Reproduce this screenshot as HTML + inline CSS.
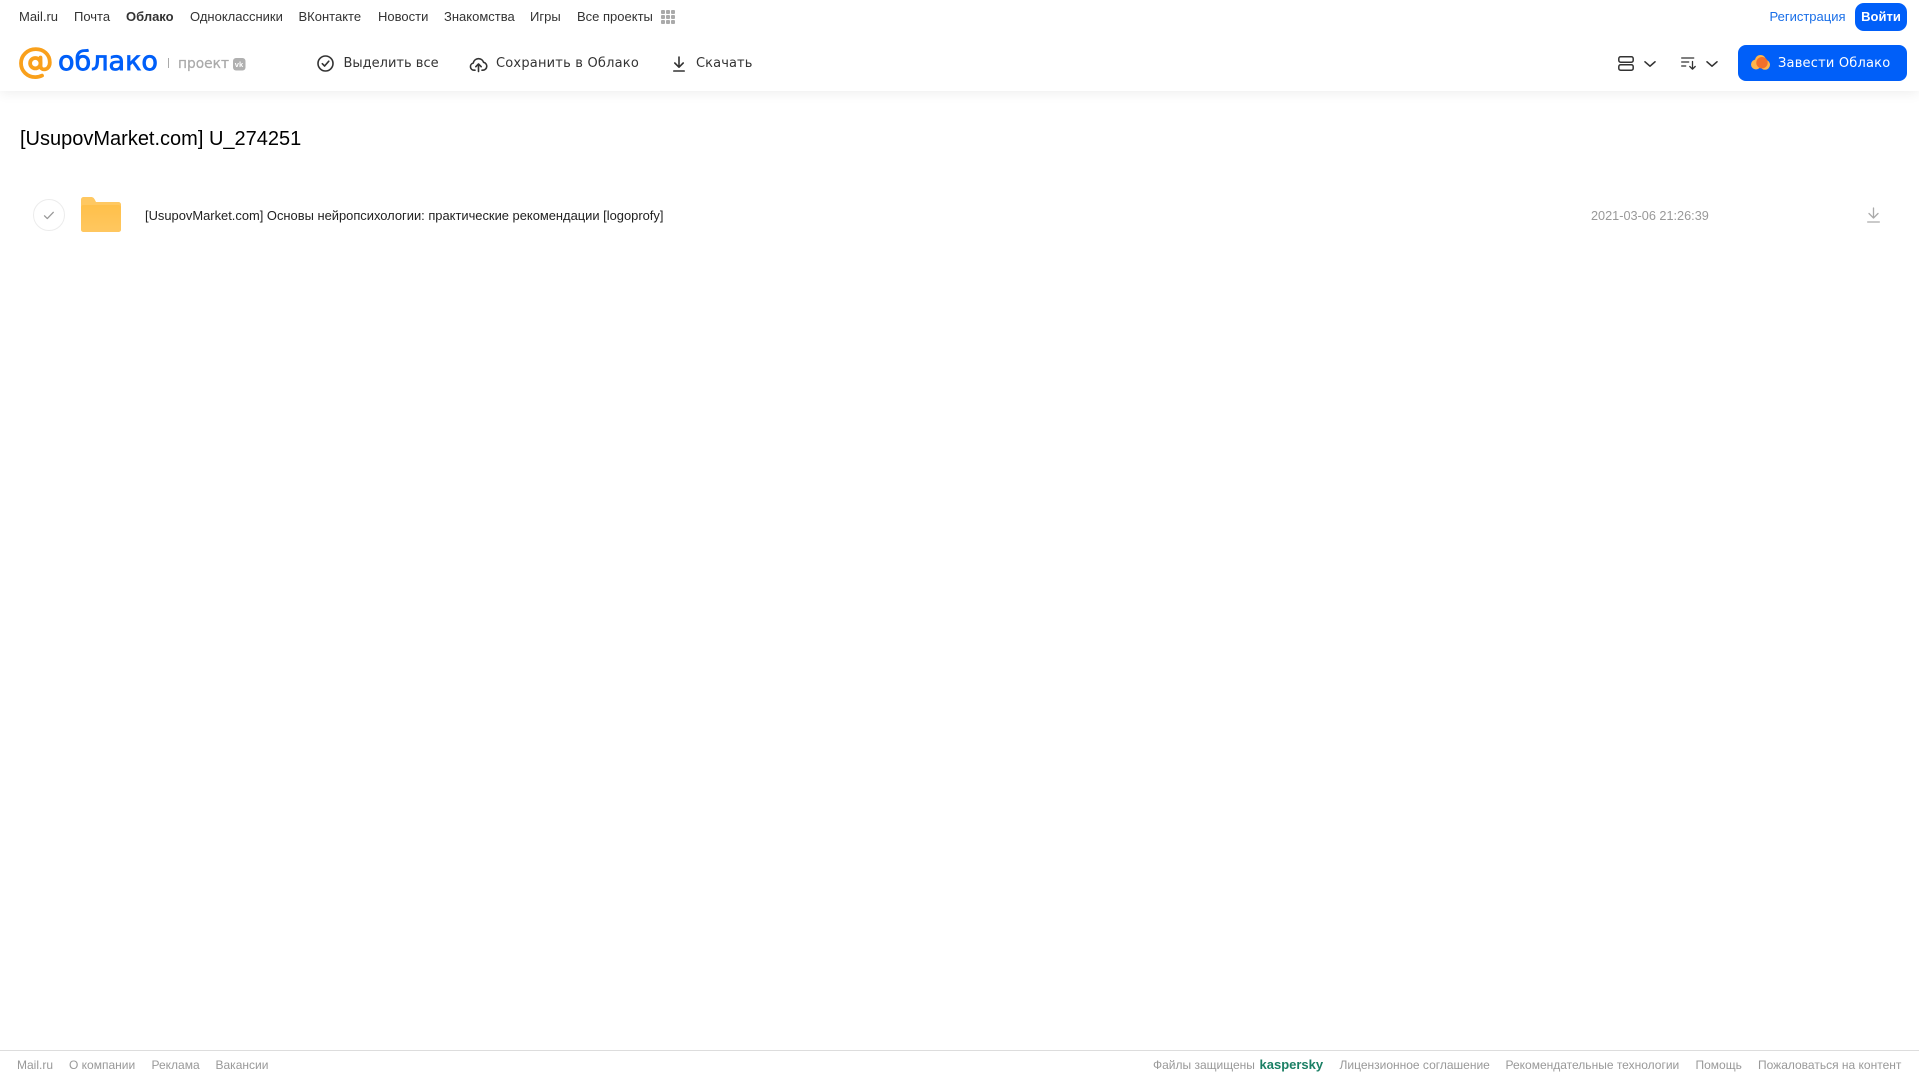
<!DOCTYPE html>
<html lang="ru">
<head>
<meta charset="utf-8">
<title>[UsupovMarket.com] U_274251</title>
<style>
html,body{margin:0;padding:0;background:#fff}
body{position:relative;width:1919px;height:1079px;overflow:hidden;font-family:"Liberation Sans",sans-serif}
.t{position:absolute;white-space:nowrap;line-height:20px;height:20px}
.n{top:7px;font-size:13px;color:#333}
.m{top:54px;font-family:"DejaVu Sans",sans-serif;font-size:13px;color:#333}
.f{top:1055px;font-size:12px;color:#999}
svg{position:absolute;overflow:visible}
#hd{position:absolute;left:0;top:0;width:1919px;height:91px;background:#fff;box-shadow:0 2px 12px rgba(0,0,0,.07)}
</style>
</head>
<body>
<div id="hd"></div>

<span class="t n" style="left:19px">Mail.ru</span>
<span class="t n" style="left:74px">Почта</span>
<span class="t n" style="left:126px;font-weight:700">Облако</span>
<span class="t n" style="left:190px">Одноклассники</span>
<span class="t n" style="left:298.500px">ВКонтакте</span>
<span class="t n" style="left:378px">Новости</span>
<span class="t n" style="left:444px">Знакомства</span>
<span class="t n" style="left:530px">Игры</span>
<span class="t n" style="left:577px">Все проекты</span>
<svg style="left:661px;top:10px" width="14" height="14" viewBox="0 0 14 14" fill="#aaa">
<rect x="0" y="0" width="4" height="4" rx="1"/><rect x="5" y="0" width="4" height="4" rx="1"/><rect x="10" y="0" width="4" height="4" rx="1"/>
<rect x="0" y="5" width="4" height="4" rx="1"/><rect x="5" y="5" width="4" height="4" rx="1"/><rect x="10" y="5" width="4" height="4" rx="1"/>
<rect x="0" y="10" width="4" height="4" rx="1"/><rect x="5" y="10" width="4" height="4" rx="1"/><rect x="10" y="10" width="4" height="4" rx="1"/>
</svg>

<span class="t n" style="left:1769.500px;color:#1a6fe8">Регистрация</span>
<div style="position:absolute;left:1855px;top:3px;width:52px;height:28px;border-radius:9px;background:#005ff9;color:#fff;font-size:13px;font-weight:700;line-height:28px;text-align:center">Войти</div>

<!-- logo -->
<svg style="left:19px;top:47px" width="33" height="32" viewBox="0 0 33 32" fill="none">
<path d="M21.500 16.200a5.200 5.200 0 1 1-10.400 0a5.200 5.200 0 1 1 10.400 0z" stroke="#f9a01b" stroke-width="3.800"/>
<path d="M21.500 10.500v8.200c0 2.600 1.600 3.700 3.600 3.700 3 0 5.700-2.300 5.700-7 0-8-6.300-13.300-14-13.300C8.500 2.100 2 8.400 2 16.200c0 7.800 6.300 13.900 14.300 13.900 2.700 0 4.900-.6 6.700-1.500" stroke="#f9a01b" stroke-width="3.800" stroke-linecap="round"/>
</svg>
<svg style="left:0;top:0" width="260" height="91">
<text x="58" y="70" font-family="DejaVu Sans, sans-serif" font-size="27" fill="#005ff9" stroke="#005ff9" stroke-width=".8" textLength="100" lengthAdjust="spacingAndGlyphs">облако</text>
<rect x="168" y="58" width="1" height="10" fill="#aaa"/>
<text x="178" y="68" font-family="DejaVu Sans, sans-serif" font-size="14.500" fill="#aaa" stroke="#aaa" stroke-width=".25" textLength="51" lengthAdjust="spacingAndGlyphs">проект</text>
<rect x="233" y="58" width="12.500" height="12.500" rx="3" fill="#b0b0b0"/>
<text x="234.800" y="67" font-family="Liberation Sans, sans-serif" font-size="7.500" font-weight="700" fill="#fff">vk</text>
</svg>

<!-- toolbar -->
<svg style="left:316.500px;top:54.500px" width="17" height="17" viewBox="0 0 17 17" fill="none" stroke="#333" stroke-width="1.600" stroke-linecap="round" stroke-linejoin="round">
<circle cx="8.500" cy="8.500" r="7.500"/><path d="M5.300 8.700l2.300 2.300 4.200-4.800"/>
</svg>
<span class="t m" style="left:343.500px">Выделить все</span>

<svg style="left:469.500px;top:55.500px" width="17" height="16" viewBox="0 0 17 16" fill="none" stroke="#333" stroke-width="1.600" stroke-linecap="round" stroke-linejoin="round">
<path d="M5 14.200H4A3.600 3.600 0 0 1 3.200 7.100 5.400 5.400 0 0 1 13.600 6.300 4 4 0 0 1 13 14.200h-1"/>
<path d="M8.500 15.500V8M5.800 10.700l2.700-2.700 2.700 2.700"/>
</svg>
<span class="t m" style="left:496px;letter-spacing:.2px">Сохранить в Облако</span>

<svg style="left:673px;top:56px" width="12" height="16" viewBox="0 0 12 16" fill="none" stroke="#333" stroke-width="1.600" stroke-linecap="round" stroke-linejoin="round">
<path d="M6 1v10M1.800 7L6 11.200 10.200 7M.8 15h10.400"/>
</svg>
<span class="t m" style="left:696px;letter-spacing:.1px">Скачать</span>

<svg style="left:1618px;top:56px" width="16" height="15" viewBox="0 0 16 15" fill="none" stroke="#333" stroke-width="1.500">
<rect x=".8" y=".8" width="14.400" height="5.400" rx="1.800"/><rect x=".8" y="8.800" width="14.400" height="5.400" rx="1.800"/>
</svg>
<svg style="left:1644px;top:61px" width="12" height="6" viewBox="0 0 12 6" fill="none" stroke="#333" stroke-width="1.600" stroke-linecap="round" stroke-linejoin="round"><path d="M1 .8l5 4.400 5-4.400"/></svg>
<svg style="left:1681px;top:57px" width="16" height="13" viewBox="0 0 16 13" fill="none" stroke="#333" stroke-width="1.300" stroke-linecap="round" stroke-linejoin="round">
<path d="M.7 1h12M.7 5h7M.7 9h4M11.500 4.500v7.500M8.800 9.500l2.700 2.700 2.700-2.700"/>
</svg>
<svg style="left:1706px;top:61px" width="12" height="6" viewBox="0 0 12 6" fill="none" stroke="#333" stroke-width="1.600" stroke-linecap="round" stroke-linejoin="round"><path d="M1 .8l5 4.400 5-4.400"/></svg>

<div style="position:absolute;left:1738px;top:45px;width:169px;height:36px;border-radius:8px;background:#005ff9"></div>
<svg style="left:1751px;top:55px" width="19" height="15" viewBox="0 0 19 15">
<circle cx="5" cy="9.500" r="5" fill="#ffb54a"/><circle cx="9.500" cy="5.500" r="5.500" fill="#ffb54a"/><circle cx="14" cy="9.800" r="5" fill="#ffb54a"/>
<circle cx="11" cy="7.700" r="5.700" fill="#f2702a"/>
</svg>
<span class="t m" style="left:1778px;color:#fff;letter-spacing:.2px">Завести Облако</span>

<!-- title -->
<div class="t" style="left:20px;top:129px;font-size:20px;color:#000">[UsupovMarket.com] U_274251</div>

<!-- row -->
<div style="position:absolute;left:33px;top:199px;width:30px;height:30px;border:1px solid #ececec;border-radius:50%"></div>
<svg style="left:43px;top:211px" width="12" height="9" viewBox="0 0 12 9" fill="none" stroke="#999" stroke-width="1.300" stroke-linecap="round" stroke-linejoin="round"><path d="M1.500 4.800l2.800 2.800 6-6.300"/></svg>
<svg style="left:81px;top:197px" width="40" height="35" viewBox="0 0 40 35">
<defs><linearGradient id="fg" x1="0" y1="0" x2="0" y2="1"><stop offset="0" stop-color="#ffc04a"/><stop offset="1" stop-color="#ffc760"/></linearGradient></defs>
<path d="M0 2.500A2.500 2.500 0 0 1 2.500 0h7.500c2 0 3 1 4 3l1 2H37.500A2.500 2.500 0 0 1 40 7.500v25a2.500 2.500 0 0 1-2.500 2.500h-35A2.500 2.500 0 0 1 0 32.500z" fill="#ffc861"/>
<rect x="0" y="8" width="40" height="27" rx="2.500" fill="url(#fg)"/>
</svg>
<div class="t" style="left:145px;top:205.500px;font-size:12.920px;color:#222">[UsupovMarket.com] Основы нейропсихологии: практические рекомендации [logoprofy]</div>
<div class="t" style="left:1591px;top:205.500px;font-size:12.700px;color:#999">2021-03-06 21:26:39</div>
<svg style="left:1866.500px;top:207px" width="13" height="16" viewBox="0 0 13 16" fill="none" stroke="#aaa" stroke-width="1.300" stroke-linecap="round" stroke-linejoin="round">
<path d="M6.500 1v9.500M2 6.500l4.500 4.500L11 6.500M.7 15h11.600"/>
</svg>

<!-- footer -->
<div style="position:absolute;left:0;top:1050px;width:1919px;height:1px;background:#ddd"></div>
<span class="t f" style="left:17px">Mail.ru</span>
<span class="t f" style="left:69px">О компании</span>
<span class="t f" style="left:151.500px">Реклама</span>
<span class="t f" style="left:215.500px">Вакансии</span>
<span class="t f" style="left:1153px">Файлы защищены</span>
<span class="t f" style="left:1259.500px;color:#1a7f64;font-weight:700;font-size:13px">kaspersky</span>
<span class="t f" style="left:1339.500px">Лицензионное соглашение</span>
<span class="t f" style="left:1505.500px">Рекомендательные технологии</span>
<span class="t f" style="left:1695.500px">Помощь</span>
<span class="t f" style="left:1758px">Пожаловаться на контент</span>
</body>
</html>
